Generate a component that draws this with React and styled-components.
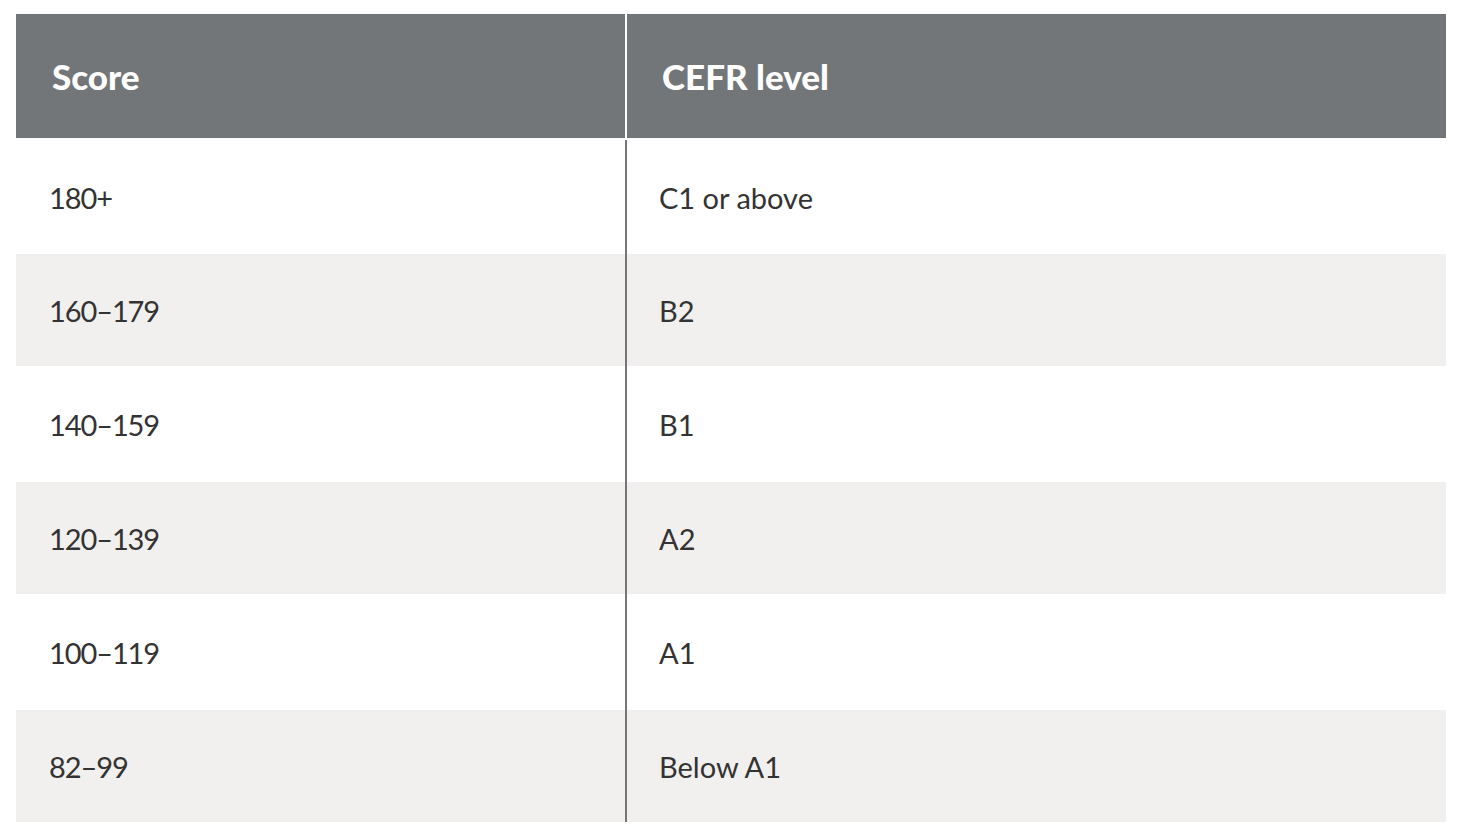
import React from "react";
import styled, { createGlobalStyle } from "styled-components";

const Global = createGlobalStyle`
  html, body {
    margin: 0;
    padding: 0;
    background: #ffffff;
  }
  body {
    font-family: Lato, "Noto Sans", "Liberation Sans", sans-serif;
  }
`;

const Page = styled.div`
  padding: 14px 16px 0 16px;
`;

const Table = styled.div`
  width: 1430px;
  display: flex;
  flex-direction: column;
`;

const HeaderRow = styled.div`
  display: grid;
  grid-template-columns: 609px 1fr;
  height: 124px;
  background: #737678;
`;

const HeadCell = styled.div`
  display: flex;
  align-items: center;
  padding-left: ${p => (p.$right ? "35px" : "36px")};
  color: #ffffff;
  font-weight: 900;
  font-size: 35px;
  border-left: ${p => (p.$right ? "2px solid #ffffff" : "none")};
`;

const Body = styled.div`
  padding-top: 2px;
  display: flex;
  flex-direction: column;
`;

const Row = styled.div`
  display: grid;
  grid-template-columns: 609px 1fr;
  height: ${p => p.$h}px;
  background: ${p => (p.$striped ? "#f1f0ef" : "#ffffff")};
`;

const Cell = styled.div`
  display: flex;
  align-items: center;
  padding-left: ${p => (p.$right ? "32px" : "33px")};
  color: #333333;
  font-size: 29px;
  letter-spacing: ${p => (p.$right ? "0" : "-1.1px")};
  border-left: ${p => (p.$right ? "2px solid #75757a" : "none")};
`;

const rows = [
  ["180+", "C1 or above"],
  ["160–179", "B2"],
  ["140–159", "B1"],
  ["120–139", "A2"],
  ["100–119", "A1"],
  ["82–99", "Below A1"],
];

export default function App() {
  return (
    <Page>
      <Global />
      <Table>
        <HeaderRow>
          <HeadCell>Score</HeadCell>
          <HeadCell $right>CEFR level</HeadCell>
        </HeaderRow>
        <Body>
          {rows.map(([score, level], i) => (
            <Row key={score} $striped={i % 2 === 1} $h={i === 0 ? 114 : i % 2 === 1 ? 112 : 116}>
              <Cell>{score}</Cell>
              <Cell $right>{level}</Cell>
            </Row>
          ))}
        </Body>
      </Table>
    </Page>
  );
}
